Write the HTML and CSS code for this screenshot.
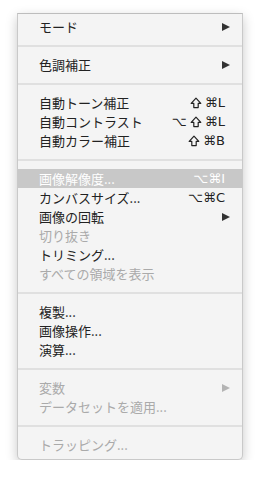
FILE: index.html
```html
<!DOCTYPE html>
<html lang="ja">
<head>
  <meta charset="UTF-8" />
  <title>イメージ メニュー</title>
  <link rel="stylesheet" href="styles.css">
</head>
<body>

  <ul class="menu">
    <li class="item"><span class="label">モード</span><span class="arrow"></span></li>
    <li class="sep"></li>
    <li class="item"><span class="label">色調補正</span><span class="arrow"></span></li>
    <li class="sep"></li>
    <li class="item"><span class="label">自動トーン補正</span><span class="key"><svg class="shift" viewBox="0 0 12 12"><path d="M6 1.2 L10.8 6.4 H8.2 V10.6 H3.8 V6.4 H1.2 Z"/></svg>⌘L</span></li>
    <li class="item"><span class="label">自動コントラスト</span><span class="key">⌥<svg class="shift" viewBox="0 0 12 12"><path d="M6 1.2 L10.8 6.4 H8.2 V10.6 H3.8 V6.4 H1.2 Z"/></svg>⌘L</span></li>
    <li class="item"><span class="label">自動カラー補正</span><span class="key"><svg class="shift" viewBox="0 0 12 12"><path d="M6 1.2 L10.8 6.4 H8.2 V10.6 H3.8 V6.4 H1.2 Z"/></svg>⌘B</span></li>
    <li class="sep"></li>
    <li class="item active"><span class="label">画像解像度...</span><span class="key">⌥⌘I</span></li>
    <li class="item"><span class="label">カンバスサイズ...</span><span class="key">⌥⌘C</span></li>
    <li class="item"><span class="label">画像の回転</span><span class="arrow"></span></li>
    <li class="item disabled"><span class="label">切り抜き</span></li>
    <li class="item"><span class="label">トリミング...</span></li>
    <li class="item disabled"><span class="label">すべての領域を表示</span></li>
    <li class="sep"></li>
    <li class="item"><span class="label">複製...</span></li>
    <li class="item"><span class="label">画像操作...</span></li>
    <li class="item"><span class="label">演算...</span></li>
    <li class="sep"></li>
    <li class="item disabled"><span class="label">変数</span><span class="arrow"></span></li>
    <li class="item disabled"><span class="label">データセットを適用...</span></li>
    <li class="sep"></li>
    <li class="item disabled"><span class="label">トラッピング...</span></li>
  </ul>

</body>
</html>
```

FILE: styles.css
```css
body {
  margin: 0;
  padding: 13px 0 0 17px;
  background: #fff;
  font-family: "Noto Sans CJK JP", "DejaVu Sans", sans-serif;
  color: #222;
}
.menu {
  list-style: none;
  margin: 0;
  padding: 3px 0 5px;
  width: 226px;
  box-sizing: border-box;
  background: #f4f4f4;
  border: 1px solid #c9c9c9;
  border-top-color: #bdbdbd;
  border-radius: 0 0 5px 5px;
  box-shadow: 0 4px 12px rgba(0,0,0,0.22);
}
.item {
  display: flex;
  align-items: center;
  height: 19px;
  padding: 0 17px 0 21px;
  font-size: 13px;
  line-height: 19px;
}
.label { flex: 1; }
.key {
  display: flex;
  align-items: center;
  gap: 3px;
  font-family: "DejaVu Sans", sans-serif;
  font-size: 13px;
}
.shift {
  width: 12px;
  height: 12px;
  fill: none;
  stroke: currentColor;
  stroke-width: 1.2;
  stroke-linejoin: round;
}
.arrow {
  width: 0;
  height: 0;
  margin-right: -5px;
  border-left: 8px solid #333;
  border-top: 4px solid transparent;
  border-bottom: 4px solid transparent;
}
.active {
  background: #c8c8c8;
  color: #fff;
}
.disabled { color: #aaa; }
.disabled .arrow { border-left-color: #b4b4b4; }
.sep {
  height: 19px;
  display: flex;
  align-items: center;
}
.sep::before {
  content: "";
  flex: 1;
  height: 2px;
  background: #e0e0e0;
}
```
